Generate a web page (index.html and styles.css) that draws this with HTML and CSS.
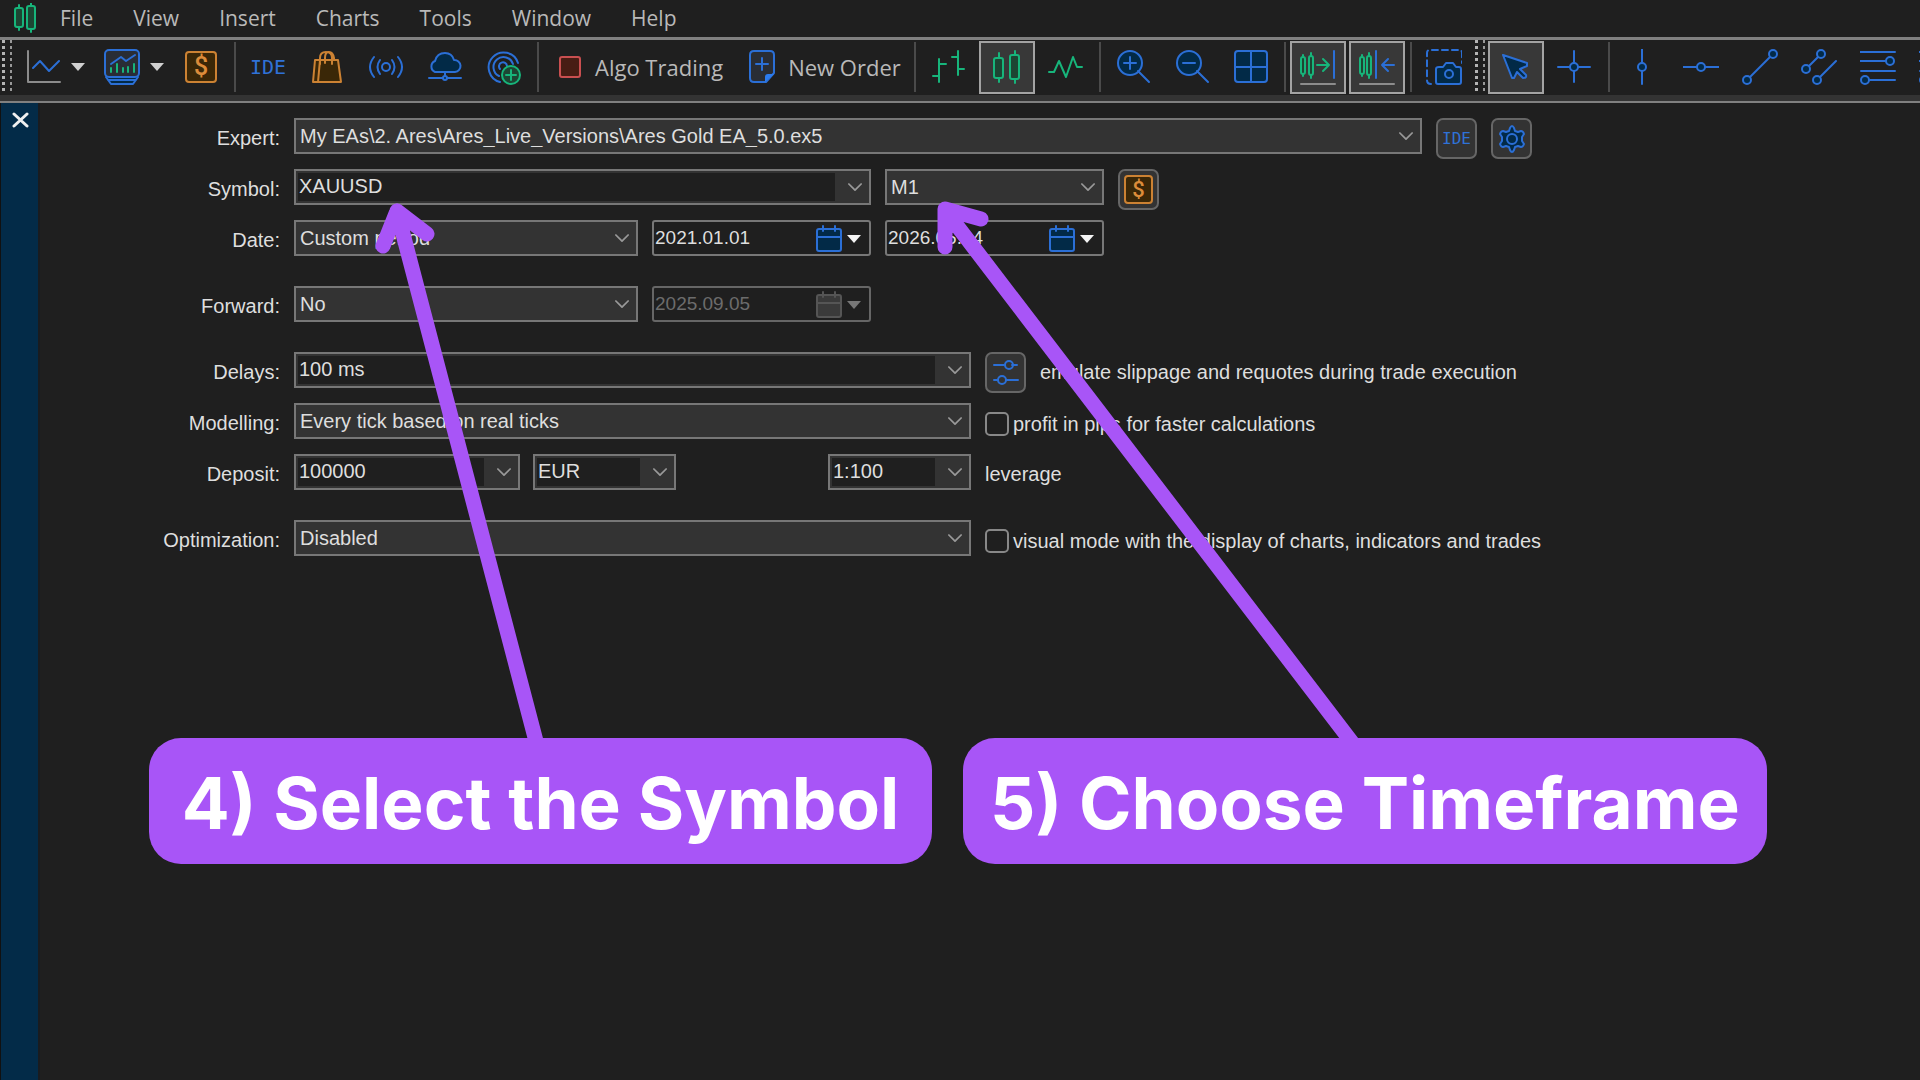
FILE: index.html
```html
<!DOCTYPE html>
<html lang="en">
<head>
    <meta charset="UTF-8">
    <meta name="viewport" content="width=device-width, initial-scale=1.0">
    <title>Strategy Tester</title>
    <link rel="stylesheet" href="styles.css">
</head>
<body>
    <nav class="menu">
        <svg class="logo" width="24" height="30" viewBox="0 0 24 30">
            <g class="green filled"><path d="M5 2v3M5 24v3M17 0v3M17 26v3"/><rect x="1" y="5" width="8" height="19" rx="2"/><rect x="13" y="3" width="8" height="23" rx="2"/></g>
        </svg>
        <button>File</button>
        <button>View</button>
        <button>Insert</button>
        <button>Charts</button>
        <button>Tools</button>
        <button>Window</button>
        <button>Help</button>
    </nav>

    <div class="toolbar">
        <span class="grip"></span>
        <div class="split">
            <button class="tool" aria-label="Line studies">
                <svg class="icon" viewBox="0 0 36 36"><path class="gray" d="M3 2v31h32"/><path class="blue" d="M8 19l7-7 9 10 10-10"/></svg>
            </button>
            <button class="caret" aria-label="More line studies"><span class="drop"></span></button>
        </div>
        <div class="split">
            <button class="tool" aria-label="Templates">
                <svg class="icon" viewBox="0 0 36 36">
                    <path class="blue filled" d="M2 28l5 7h22l5-7M4 31h28"/>
                    <rect class="blue screen" x="1" y="1" width="34" height="27" rx="4"/>
                    <path class="blue" d="M7 15l10-7 5 4 9-6"/>
                    <path class="green" d="M7 23v-4M13 23v-8M19 23v-4M24 23v-5M30 23v-8"/>
                </svg>
            </button>
            <button class="caret" aria-label="More templates"><span class="drop"></span></button>
        </div>
        <button class="tool" aria-label="Symbols"><span class="dollar">$</span></button>
        <span class="sep"></span>
        <button class="tool ide">IDE</button>
        <button class="tool" aria-label="Market">
            <svg class="icon" viewBox="0 0 36 36"><g class="orange filled"><path d="M6 11h23l3 22H4z"/><path d="M11 11L9 33"/><path class="hollow" d="M11 15V9q0-6 6-6t6 6v6M16 14V9q0-6 4-6t5 6v2"/></g></svg>
        </button>
        <button class="tool" aria-label="Signals">
            <svg class="icon" viewBox="0 0 36 36"><g class="blue"><circle cx="18" cy="18" r="4"/><path d="M12 11q-5 7 0 14M24 11q5 7 0 14M6 8q-8 10 0 20M30 8q8 10 0 20"/></g></svg>
        </button>
        <button class="tool" aria-label="Virtual hosting">
            <svg class="icon" viewBox="0 0 36 36"><g class="blue filled"><path d="M8 23a6 6 0 0 1 0-11q2-8 10-8 7 0 9 7a6 6 0 0 1 1 12z"/><path d="M18 23v6M2 29h32"/><circle cx="18" cy="29" r="2"/></g></svg>
        </button>
        <button class="tool" aria-label="Copy trading">
            <svg class="icon" viewBox="0 0 36 36">
                <path class="blue" d="M14 33A15 15 0 1 1 32 14M13 27A10 10 0 1 1 27 15M14 20A4 4 0 1 1 21 17"/>
                <g class="green filled"><circle cx="25" cy="26" r="9"/><path d="M20 26h10M25 21v10"/></g>
            </svg>
        </button>
        <span class="sep"></span>
        <button class="tool wide">
            <svg width="24" height="24" viewBox="0 0 24 24"><rect class="red" x="2" y="2" width="20" height="20" rx="2"/></svg>
            Algo Trading
        </button>
        <button class="tool wide">
            <svg width="26" height="36" viewBox="0 0 26 36"><path class="blue screen" d="M5 2h16q4 0 4 4v18l-8 9H5q-4 0-4-4V6q0-4 4-4z"/><path class="solid" d="M16 33v-5q0-3 3-3h6z"/><path class="blue" d="M7 15h12M13 9v12"/></svg>
            New Order
        </button>
        <span class="sep"></span>
        <button class="tool" aria-label="Bar chart">
            <svg class="icon" viewBox="0 0 36 36"><path class="green" d="M9 10v23M3 27h6M9 15h7M28 2v24M22 8h6M28 20h6"/></svg>
        </button>
        <button class="tool active" aria-label="Candlesticks">
            <svg class="icon" viewBox="0 0 36 36"><g class="green filled"><path d="M10 4v5M10 29v4M26 2v4M26 30v4"/><rect x="5" y="9" width="9" height="20" rx="2"/><rect x="21" y="6" width="9" height="24" rx="2"/></g></svg>
        </button>
        <button class="tool" aria-label="Line chart">
            <svg class="icon" viewBox="0 0 36 36"><path class="green" d="M1 23h5l5-11 7 16 7-20 4 10h5"/></svg>
        </button>
        <span class="sep"></span>
        <button class="tool" aria-label="Zoom in">
            <svg class="icon" viewBox="0 0 36 36"><g class="blue filled"><circle cx="15" cy="14" r="12"/><path d="M23 22l11 11M9 14h12M15 8v12"/></g></svg>
        </button>
        <button class="tool" aria-label="Zoom out">
            <svg class="icon" viewBox="0 0 36 36"><g class="blue filled"><circle cx="15" cy="14" r="12"/><path d="M23 22l11 11M9 14h12"/></g></svg>
        </button>
        <button class="tool" aria-label="Tile windows">
            <svg class="icon" viewBox="0 0 36 36"><g class="blue filled"><rect x="2" y="2" width="32" height="31" rx="3"/><path d="M18 2v31M2 18h32"/></g></svg>
        </button>
        <span class="sep"></span>
        <button class="tool active" aria-label="Auto scroll">
            <svg class="icon" viewBox="0 0 36 36"><g class="green filled"><path d="M3 6v2M3 25v2M11 4v3M11 26v3"/><rect x="1" y="8" width="4" height="17" rx="2"/><rect x="9" y="7" width="4" height="19" rx="2"/><path class="hollow" d="M17 16h12M23 10l6 6-6 6"/></g><path class="blue" d="M34 2v27"/><path class="gray" d="M1 35h34"/></svg>
        </button>
        <button class="tool active" aria-label="Chart shift">
            <svg class="icon" viewBox="0 0 36 36"><g class="green filled"><path d="M3 6v2M3 25v2M10 4v3M10 26v3"/><rect x="1" y="8" width="4" height="17" rx="2"/><rect x="8" y="7" width="4" height="19" rx="2"/></g><path class="blue" d="M17 2v27M35 16H23M29 10l-6 6 6 6"/><path class="gray" d="M1 35h34"/></svg>
        </button>
        <span class="sep"></span>
        <button class="tool" aria-label="Screenshot">
            <svg class="icon" viewBox="0 0 36 36"><path class="blue" stroke-dasharray="6 4" d="M5 35q-4 0-4-4V4q0-3 3-3h29q3 0 3 3v10"/><g class="blue filled"><path d="M13 18h4l3-4h7l3 4h3q2 0 2 2v13q0 2-2 2H12q-2 0-2-2V20q0-2 3-2z"/><circle cx="23" cy="25" r="4"/></g></svg>
        </button>
        <span class="grip"></span>
        <button class="tool active" aria-label="Cursor">
            <svg class="icon" viewBox="0 0 36 36"><path class="blue filled" d="M5 6l24 8v3l-7 3 6 6q1 3-3 3l-6-6-3 6h-2z"/></svg>
        </button>
        <button class="tool" aria-label="Crosshair">
            <svg class="icon" viewBox="0 0 36 36"><g class="blue filled"><path d="M17 2v31M1 18h32"/><circle cx="17" cy="18" r="4"/></g></svg>
        </button>
        <span class="sep"></span>
        <button class="tool" aria-label="Vertical line">
            <svg class="icon" viewBox="0 0 36 36"><g class="blue filled"><path d="M18 0v35"/><circle cx="18" cy="18" r="4"/></g></svg>
        </button>
        <button class="tool" aria-label="Horizontal line">
            <svg class="icon" viewBox="0 0 36 36"><g class="blue filled"><path d="M0 18h36"/><circle cx="18" cy="18" r="4"/></g></svg>
        </button>
        <button class="tool" aria-label="Trendline">
            <svg class="icon" viewBox="0 0 36 36"><g class="blue filled"><path d="M5 31L31 5"/><circle cx="31" cy="5" r="4"/><circle cx="5" cy="31" r="4"/></g></svg>
        </button>
        <button class="tool" aria-label="Channel">
            <svg class="icon" viewBox="0 0 36 36"><g class="blue filled"><path d="M5 20L20 5M16 31l19-19"/><circle cx="20" cy="5" r="4"/><circle cx="5" cy="20" r="4"/><circle cx="16" cy="31" r="4"/></g></svg>
        </button>
        <button class="tool" aria-label="Fibonacci">
            <svg class="icon" viewBox="0 0 36 36"><g class="blue filled"><path d="M0 3h35M0 12h30M1 22h34M5 31h30"/><circle cx="30" cy="12" r="4"/><circle cx="5" cy="31" r="4"/></g></svg>
        </button>
        <button class="tool" aria-label="Elliott waves">
            <svg class="icon" viewBox="0 0 36 36"><g class="blue filled"><path d="M0 3h35M0 12h35M1 22h34M5 31h30"/><circle cx="5" cy="31" r="4"/></g></svg>
        </button>
    </div>

    <main class="tester">
        <aside class="side">
            <button class="close" aria-label="Close">
                <svg width="18" height="18" viewBox="0 0 18 18"><path d="M2 3l13 12M15 3L2 15"/></svg>
            </button>
        </aside>

        <form class="settings">
            <div class="row">
                <label class="name" for="expert">Expert:</label>
                <div class="select full">
                    <select id="expert"><option>My EAs\2. Ares\Ares_Live_Versions\Ares Gold EA_5.0.ex5</option></select>
                    <svg class="arrow" viewBox="0 0 16 10"><path d="M1 1l7 7 7-7"/></svg>
                </div>
                <button type="button" class="square ide">IDE</button>
                <button type="button" class="square" aria-label="Expert settings">
                    <svg width="28" height="28" viewBox="0 0 28 28"><g class="blue filled"><path d="M14 1q1 0 2 2l1 3 3 1 3-1q2 0 3 3l-2 3v4l2 3q-1 3-3 3l-3-1-3 1-1 3q-1 2-2 2t-2-2l-1-3-3-1-3 1q-2 0-3-3l2-3v-4l-2-3q1-3 3-3l3 1 3-1 1-3q1-2 2-2z"/><circle cx="14" cy="14" r="5"/></g></svg>
                </button>
            </div>
            <div class="row">
                <label class="name" for="symbol">Symbol:</label>
                <div class="combo medium">
                    <input id="symbol" type="text" value="XAUUSD">
                    <button type="button" aria-label="Symbols"><svg class="arrow" viewBox="0 0 16 10"><path d="M1 1l7 7 7-7"/></svg></button>
                </div>
                <div class="select small">
                    <select aria-label="Timeframe"><option>M1</option></select>
                    <svg class="arrow" viewBox="0 0 16 10"><path d="M1 1l7 7 7-7"/></svg>
                </div>
                <button type="button" class="square" aria-label="Symbol properties"><span class="dollar">$</span></button>
            </div>
            <div class="row">
                <label class="name" for="period">Date:</label>
                <div class="select half">
                    <select id="period"><option>Custom period</option></select>
                    <svg class="arrow" viewBox="0 0 16 10"><path d="M1 1l7 7 7-7"/></svg>
                </div>
                <div class="date small">
                    <input type="text" value="2021.01.01" aria-label="Start date">
                    <button type="button" aria-label="Pick start date">
                        <svg width="26" height="28" viewBox="0 0 26 28"><g class="blue filled"><rect x="1" y="4" width="24" height="22" rx="2"/><path d="M1 12h24M7 1v5M19 1v5"/></g></svg>
                        <span class="drop"></span>
                    </button>
                </div>
                <div class="date small">
                    <input type="text" value="2026.05.14" aria-label="End date">
                    <button type="button" aria-label="Pick end date">
                        <svg width="26" height="28" viewBox="0 0 26 28"><g class="blue filled"><rect x="1" y="4" width="24" height="22" rx="2"/><path d="M1 12h24M7 1v5M19 1v5"/></g></svg>
                        <span class="drop"></span>
                    </button>
                </div>
            </div>
            <div class="row spaced">
                <label class="name" for="forward">Forward:</label>
                <div class="select half">
                    <select id="forward"><option>No</option></select>
                    <svg class="arrow" viewBox="0 0 16 10"><path d="M1 1l7 7 7-7"/></svg>
                </div>
                <div class="date small off">
                    <input type="text" value="2025.09.05" aria-label="Forward date" disabled>
                    <button type="button" aria-label="Pick forward date" disabled>
                        <svg width="26" height="28" viewBox="0 0 26 28"><g class="dim"><rect x="1" y="4" width="24" height="22" rx="2"/><path d="M1 12h24M7 1v5M19 1v5"/></g></svg>
                        <span class="drop"></span>
                    </button>
                </div>
            </div>
            <div class="row spaced">
                <label class="name" for="delays">Delays:</label>
                <div class="combo large">
                    <input id="delays" type="text" value="100 ms">
                    <button type="button" aria-label="Delays"><svg class="arrow" viewBox="0 0 16 10"><path d="M1 1l7 7 7-7"/></svg></button>
                </div>
                <button type="button" class="square" aria-label="Delay settings">
                    <svg width="28" height="28" viewBox="0 0 28 28"><g class="blue"><path d="M2 6h10M20 6h5M2 21h4M14 21h12"/><circle cx="17" cy="6" r="4"/><circle cx="10" cy="21" r="4"/></g></svg>
                </button>
                <span class="note">emulate slippage and requotes during trade execution</span>
            </div>
            <div class="row">
                <label class="name" for="modelling">Modelling:</label>
                <div class="select large">
                    <select id="modelling"><option>Every tick based on real ticks</option></select>
                    <svg class="arrow" viewBox="0 0 16 10"><path d="M1 1l7 7 7-7"/></svg>
                </div>
                <label class="check"><input type="checkbox">profit in pips for faster calculations</label>
            </div>
            <div class="row">
                <label class="name" for="deposit">Deposit:</label>
                <div class="money large">
                    <div class="combo amount">
                        <input id="deposit" type="text" value="100000">
                        <button type="button" aria-label="Deposits"><svg class="arrow" viewBox="0 0 16 10"><path d="M1 1l7 7 7-7"/></svg></button>
                    </div>
                    <div class="combo tiny">
                        <input type="text" value="EUR" aria-label="Currency">
                        <button type="button" aria-label="Currencies"><svg class="arrow" viewBox="0 0 16 10"><path d="M1 1l7 7 7-7"/></svg></button>
                    </div>
                    <div class="combo tiny last">
                        <input id="leverage" type="text" value="1:100">
                        <button type="button" aria-label="Leverages"><svg class="arrow" viewBox="0 0 16 10"><path d="M1 1l7 7 7-7"/></svg></button>
                    </div>
                </div>
                <label class="unit" for="leverage">leverage</label>
            </div>
            <div class="row spaced">
                <label class="name" for="optimization">Optimization:</label>
                <div class="select large">
                    <select id="optimization"><option>Disabled</option></select>
                    <svg class="arrow" viewBox="0 0 16 10"><path d="M1 1l7 7 7-7"/></svg>
                </div>
                <label class="check"><input type="checkbox">visual mode with the display of charts, indicators and trades</label>
            </div>
        </form>
    </main>

    <!-- tutorial arrows and captions drawn over the window -->
    <svg class="pointers" width="1920" height="1080" viewBox="0 0 1920 1080">
        <path d="M537 745L397 211M383 246l14-35 30 23"/>
        <path d="M1354 745L945 210M945 247v-38l36 10"/>
    </svg>
    <div class="captions">
        <p>4) Select the Symbol</p>
        <p>5) Choose Timeframe</p>
    </div>
</body>
</html>
```
FILE: styles.css
```css
* {
    box-sizing: border-box;
}
body {
    margin: 0;
    min-height: 100vh;
    display: flex;
    flex-direction: column;
    position: relative;
    overflow: hidden;
    background-color: #1f1f1f;
    color: #dedede;
    font-family: "Liberation Sans", Arial, sans-serif;
    font-size: 20px;
}
button {
    margin: 0;
    padding: 0;
    border: none;
    background: none;
    color: inherit;
    font: inherit;
    cursor: pointer;
}

/* icon colours */
svg {
    fill: none;
    stroke-width: 2px;
    stroke-linecap: round;
    stroke-linejoin: round;
}
.blue {
    stroke: #2b6fd6;
}
.green {
    stroke: #17b57b;
}
.orange {
    stroke: #cc8233;
}
.gray {
    stroke: #8c8c8c;
}
.red {
    stroke: #c94f50;
    fill: #471d14;
}
.dim {
    stroke: #555;
    fill: #3a3a3a;
}
.solid {
    fill: #2b7cf0;
}
.blue.filled {
    fill: #022a47;
}
.green.filled {
    fill: #1d4533;
}
.orange.filled {
    fill: #3a2707;
}
.screen {
    fill: #292d35;
}
.hollow {
    fill: none;
}

/* menu */
.menu {
    display: flex;
    align-items: center;
    height: 37px;
    padding-left: 14px;
    padding-bottom: 1px;
}
.logo {
    margin-right: 2px;
}
.menu button {
    padding: 0 20px;
    color: #b9b9b9;
    font-family: "Open Sans", sans-serif;
    font-size: 21px;
    line-height: 28px;
}

/* toolbar */
.toolbar {
    display: flex;
    align-items: center;
    gap: 3px;
    height: 66px;
    padding: 0 0 7px 2px;
    border-top: 3px solid #808080;
    border-bottom: 2px solid #808080;
    background: linear-gradient(#1f1f1f 55px, #333 55px);
    overflow: hidden;
}
.toolbar > * {
    flex-shrink: 0;
}
.grip {
    width: 10px;
    height: 54px;
    background:
        repeating-linear-gradient(transparent 0 3px, #1f1f1f 3px 6px),
        linear-gradient(90deg, #b4b4b4 3px, transparent 3px 8px, #999 8px);
}
.split {
    display: flex;
    align-items: center;
}
.tool {
    display: flex;
    align-items: center;
    justify-content: center;
    width: 56px;
    height: 53px;
}
.active {
    border: 2px solid #a3a3a3;
    background-color: #383838;
}
.wide {
    width: auto;
    gap: 13px;
    padding: 0 8px 0 15px;
    color: #b9b9b9;
    font-family: "Open Sans", sans-serif;
    font-size: 22px;
}
.icon {
    width: 36px;
    height: 36px;
    flex-shrink: 0;
}
.caret {
    width: 20px;
    height: 53px;
}
.drop {
    display: block;
    width: 14px;
    border: 7px solid transparent;
    border-top: 8px solid #f4f4f4;
    border-bottom: none;
}
.caret .drop {
    border-top-color: #d0d0d0;
}
.sep {
    width: 2px;
    height: 50px;
    margin: 0 1px 0 2px;
    background-color: #4a4a4a;
}
.ide {
    color: #2f72d8;
    font-family: "DejaVu Sans Mono", monospace;
    font-size: 20px;
}
.dollar {
    width: 32px;
    height: 32px;
    border: 2px solid #cc8233;
    border-radius: 4px;
    background-color: #3a2707;
    color: #dc8c3a;
    font-family: Roboto, sans-serif;
    font-size: 25px;
    font-weight: 500;
    line-height: 28px;
    text-align: center;
}

/* tester panel */
.tester {
    flex: 1;
    display: flex;
}
.side {
    width: 40px;
    padding: 8px 10px 8px 11px;
    border-left: 1px solid #111;
    border-right: 2px solid #191c20;
    background-color: #032b48;
}
.close {
    display: block;
}
.close svg {
    stroke: #f0f0f0;
    stroke-width: 3px;
}
.settings {
    flex: 1;
    display: flex;
    flex-direction: column;
    gap: 15px;
    padding: 15px 20px 15px 14px;
}
.row {
    display: flex;
    align-items: flex-start;
    gap: 14px;
    height: 36px;
}
.spaced {
    margin-top: 15px;
}
.name {
    width: 226px;
    text-align: right;
    line-height: 40px;
}
.full {
    flex: 0 1 1128px;
}
.large {
    flex: 0 1 677px;
}
.medium {
    flex: 0 1 577px;
}
.half {
    flex: 0 1 344px;
}
.small {
    flex: 0 1 219px;
}
.amount {
    flex: 0 1 226px;
}
.tiny {
    flex: 0 1 143px;
}
.select, .combo, .date {
    height: 36px;
    border: 2px solid #777;
    background-color: #333;
}
.select {
    display: grid;
    align-items: center;
}
.select > * {
    grid-area: 1 / 1;
}
select, input[type="text"] {
    width: 100%;
    min-width: 0;
    margin: 0;
    border: none;
    border-radius: 0;
    outline: none;
    appearance: none;
    background-color: transparent;
    color: #dedede;
    font: inherit;
}
select {
    height: 32px;
    padding: 0 36px 0 4px;
}
.arrow {
    width: 14px;
    height: 9px;
    stroke: #999;
}
.select .arrow {
    justify-self: end;
    margin-right: 7px;
    pointer-events: none;
}
.combo {
    display: flex;
    padding: 2px;
}
.combo input {
    padding: 0 0 2px 1px;
    background-color: #1f1f1f;
}
.combo button {
    flex: 0 0 32px;
    display: flex;
    align-items: center;
    justify-content: center;
    padding-left: 7px;
}
.date {
    display: flex;
    border-radius: 3px;
    background-color: #1f1f1f;
}
.date input {
    padding: 0 0 0 1px;
    font-size: 19px;
}
.date button {
    display: flex;
    align-items: center;
    gap: 5px;
    padding: 2px 8px 0 0;
}
.off {
    border-color: #666;
}
.date.off input {
    color: #6c6c6c;
}
.off .drop {
    border-top-color: #777;
}
.square {
    display: flex;
    flex: 0 0 41px;
    align-items: center;
    justify-content: center;
    height: 41px;
    border: 2px solid #666;
    border-radius: 7px;
    background-color: #333;
}
.square.ide {
    font-size: 16px;
}
.square .dollar {
    width: 29px;
    height: 29px;
    font-size: 22px;
    line-height: 25px;
}
.note, .unit, .check {
    line-height: 40px;
    white-space: nowrap;
}
.check {
    display: flex;
    align-items: center;
    gap: 4px;
    height: 42px;
}
.check input {
    width: 24px;
    height: 24px;
    margin: 0;
    border: 2px solid #888;
    border-radius: 5px;
    appearance: none;
}
.money {
    display: flex;
    gap: 13px;
}
.last {
    margin-left: auto;
}

/* tutorial overlay */
.pointers {
    position: absolute;
    top: 0;
    left: 0;
    stroke: #a855f7;
    stroke-width: 15px;
    pointer-events: none;
}
.captions {
    position: absolute;
    top: 738px;
    left: 149px;
    display: flex;
    gap: 31px;
}
.captions p {
    min-width: 783px;
    margin: 0;
    padding: 21px 27px 17px;
    border-radius: 32px;
    background-color: #a855f7;
    color: #fff;
    font-family: Inter, sans-serif;
    font-size: 71px;
    font-weight: 700;
    line-height: 88px;
    text-align: center;
    white-space: nowrap;
}
```
